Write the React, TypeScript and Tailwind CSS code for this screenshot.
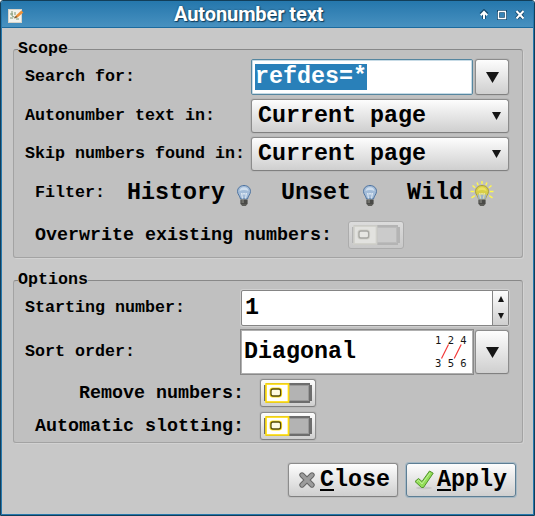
import type { ReactNode } from "react";

const MONO = "font-['Liberation_Mono',monospace] font-bold";
const RAISED =
  "rounded-[3px] border border-[#8c8c8c] border-b-[#808080] bg-gradient-to-b from-[#fdfdfd] to-[#cfcfcf] shadow-[0_0_0_1px_rgba(170,170,170,0.35)]";

function Label({ children, big = false }: { children: ReactNode; big?: boolean }) {
  return (
    <span className={`${MONO} whitespace-pre ${big ? "pt-[2px] text-[18.33px]" : "text-[16.67px]"} leading-[20px]`}>
      {children}
    </span>
  );
}

function Arrow({ w, h, up = false }: { w: number; h: number; up?: boolean }) {
  return (
    <svg width={w} height={h} viewBox="0 0 12 12" preserveAspectRatio="none" className="shrink-0">
      <path d={up ? "M0 12H12L6 0Z" : "M0 0H12L6 12Z"} fill="#151515" />
    </svg>
  );
}

function DropButton({ tall = false }: { tall?: boolean }) {
  return (
    <button className={`flex w-[34px] items-center justify-center ${tall ? "h-[44px]" : "h-[36px]"} ${RAISED}`}>
      <Arrow w={13} h={11} />
    </button>
  );
}

function Select({ value }: { value: string }) {
  return (
    <button className={`flex h-[34px] w-[258px] items-center justify-between pl-[6px] pr-[7px] ${RAISED}`}>
      <span className={`${MONO} text-[23.33px] leading-[30px]`}>{value}</span>
      <Arrow w={9} h={8} />
    </button>
  );
}

function Bulb({ lit = false }: { lit?: boolean }) {
  return (
    <svg width="26" height="26" viewBox="0 0 26 26" className="shrink-0">
      {lit && (
        <g stroke="#fff84c" strokeWidth="1.4">
          <path d="M13 0V3M8 1.5L9.2 4.2M18 1.5L16.8 4.2M3.5 4.5L6.2 6.8M22.5 4.5L19.8 6.8M1.5 10.5H5.2M20.8 10.5H24.5M2.5 16.8L5.8 14.6M23.5 16.8L20.2 14.6" />
        </g>
      )}
      <path
        d="M13 4.5C9 4.5 6.5 7.2 6.5 10.4C6.5 13.3 9 14.9 9.5 18H16.5C17 14.9 19.5 13.3 19.5 10.4C19.5 7.2 17 4.5 13 4.5Z"
        fill={lit ? "#d8cf48" : "#a3bcd8"}
        stroke={lit ? "#a89d42" : "#4f74a0"}
      />
      {lit && <path d="M8.4 13.5H17.6L16.4 18.2H9.6Z" fill="#9fb4c8" />}
      <path d="M8.5 10Q9 6.3 13 6.2Q17 6.3 17.5 10Q13 7.8 8.5 10Z" fill={lit ? "#ece262" : "#cfdeee"} />
      <path d="M11.5 17.5L10.5 12L12 13.5L13 12L14 13.5L15.5 12L14.5 17.5" fill="none" stroke={lit ? "#e9e6a4" : "#e0eaf4"} />
      <path d="M9.5 18.5H16.5V23L14.8 25H11.2L9.5 23Z" fill="#5c5c58" />
      <path d="M9.5 20H16.5M9.5 22H16.5" stroke="#393937" />
      <path d="M10.5 19H13M10.5 21H13" stroke="#96968f" />
    </svg>
  );
}

function Toggle({ disabled = false }: { disabled?: boolean }) {
  return (
    <button
      className={`flex h-[28px] w-[56px] items-center justify-center ${disabled ? "rounded-[3px] border border-[#acacac] bg-gradient-to-b from-[#dcdcdc] to-[#c8c8c8]" : RAISED}`}
    >
      <svg width="48" height="20" viewBox="0 0 48 20">
        <rect x="2" y="0" width="44" height="20" fill={disabled ? "#b4b4b4" : "#6d6d6d"} />
        <rect x="0" y="2" width="48" height="16" fill={disabled ? "#b4b4b4" : "#6d6d6d"} />
        <rect x="25" y="2.5" width="19.5" height="15" fill={disabled ? "#cbcbcb" : "#b3b3b3"} stroke={disabled ? "#bcbcbc" : "#999999"} />
        <rect x="2" y="1" width="22.5" height="18" fill={disabled ? "#e2e2df" : "#ffffff"} stroke={disabled ? "#d0d0cb" : "#ffdd10"} strokeWidth="1.7" />
        <rect x="6.8" y="5.8" width="10" height="7.4" rx="2" fill="none" stroke={disabled ? "#d0d0c9" : "#ffe01f"} strokeWidth="2.6" />
        <rect x="7" y="6" width="9.6" height="7" rx="2" fill={disabled ? "#e6e6e2" : "#fffbe0"} stroke={disabled ? "#a7a7a2" : "#554c0b"} strokeWidth="1.3" />
      </svg>
    </button>
  );
}

function FilterItem({ name, lit = false }: { name: string; lit?: boolean }) {
  return (
    <div className="flex items-center">
      <span className={`${MONO} text-[23.33px] leading-[28px]`}>{name}</span>
      <div className="mt-[2px] ml-[6px] flex">
        <Bulb lit={lit} />
      </div>
    </div>
  );
}

function TitleBar() {
  return (
    <header className="flex h-[26px] items-center border-b border-b-[#1c6b9f] bg-gradient-to-b from-[#2678ad] to-[#4791c0] pr-[9px] pl-[6px]">
      <svg width="16" height="14" viewBox="0 0 16 14" className="mt-[2px] shrink-0">
        <rect x=".5" y=".5" width="13" height="13" fill="#f2f2ed" stroke="#d7d4ca" />
        <path d="M2 5H5M4 2V7M4 7L8 9M2 9H5M8 10H11M7 3V6" stroke="#7f9877" fill="none" />
        <path d="M6.3 9.2L8 6.5L13.3 1.5L15.4 3.5L9.8 8.2Z" fill="#ed9138" />
        <path d="M6 9.5L8 6.7L9.5 8.2Z" fill="#765a39" />
      </svg>
      <h1 className="mb-[2px] ml-[150px] text-[20px] leading-[22px] font-bold tracking-[-0.1px] whitespace-nowrap text-white font-['Roboto',sans-serif] [text-shadow:1px_1px_1px_#103c5a,0_0_2px_#103c5a]">
        Autonumber text
      </h1>
      <svg width="46" height="12" viewBox="0 0 46 12" className="ml-auto shrink-0">
        <g fill="none" stroke="#174c70" strokeWidth="4">
          <path d="M6 10V3M3 5.5L6 2.5L9 5.5" />
          <rect x="20.5" y="2.5" width="7" height="7" strokeWidth="3" />
          <path d="M38.5 2L45.5 9.5M45.5 2L38.5 9.5" />
        </g>
        <g fill="none" stroke="#fff" strokeWidth="2">
          <path d="M6 10V3M2.8 6.2L6 3L9.2 6.2" />
          <path d="M20 2.5H28M20.5 3V9.5H27.5V3" strokeWidth="1.4" />
          <path d="M38.5 2L45.5 9.5M45.5 2L38.5 9.5" />
        </g>
      </svg>
    </header>
  );
}

function Group({ title, children, className }: { title: string; children: ReactNode; className: string }) {
  return (
    <fieldset className={`w-[510px] rounded-[3px] border border-[#a3a3a3] border-t-[#888888] bg-[#c0c0c0] shadow-[1px_1px_0_#d2d2d2] ${className}`}>
      <legend className="ml-[4px] h-[18px]">
        <span className={`${MONO} block text-[16.67px] leading-[18px]`}>{title}</span>
      </legend>
      {children}
    </fieldset>
  );
}

function DiagonalPreview() {
  return (
    <svg width="36" height="36" viewBox="0 0 36 36" className="shrink-0">
      <path d="M8.5 24.5L15.5 10.5M21.2 24.5L28.2 10.5" stroke="#f33b3b" strokeWidth="1.2" />
      <g className="font-['DejaVu_Sans_Mono',monospace] text-[10.5px]" fill="#151515">
        <text x="2" y="10">1</text>
        <text x="14.7" y="10">2</text>
        <text x="27.3" y="10">4</text>
        <text x="2" y="33">3</text>
        <text x="14.7" y="33">5</text>
        <text x="27.3" y="33">6</text>
      </g>
    </svg>
  );
}

export default function App() {
  return (
    <main className="flex h-[516px] w-[535px] flex-col overflow-hidden rounded-t-[3px] border border-[#123e59] bg-[#c8c8c8] text-black">
      <div className="flex grow flex-col border border-[#2678ad]">
        <TitleBar />
        <section className="flex grow flex-col pl-[11px]">
          <Group title="Scope" className="mt-[12px] h-[218px]">
            <div className="mt-[1px] flex h-[36px] items-center justify-between pr-[13px] pl-[11px]">
              <Label>Search for:</Label>
              <div className="flex gap-[2px]">
                <div className="flex h-[36px] w-[222px] items-center rounded-[2px] border border-[#56869f] bg-white pl-[3px] shadow-[inset_0_0_0_1px_#c7dbe6]">
                  <span className={`${MONO} h-[26px] bg-[#2980b9] text-[23.33px] leading-[26px] text-white`}>refdes=*</span>
                </div>
                <DropButton />
              </div>
            </div>
            <div className="mt-[4px] flex h-[34px] items-center justify-between pr-[13px] pl-[11px]">
              <Label>Autonumber text in:</Label>
              <Select value="Current page" />
            </div>
            <div className="mt-[4px] flex h-[34px] items-center justify-between pr-[13px] pl-[11px]">
              <Label>Skip numbers found in:</Label>
              <Select value="Current page" />
            </div>
            <div className="mt-[8px] flex h-[28px] items-center pl-[21px]">
              <Label>Filter:</Label>
              <div className="ml-[22px] flex gap-[24px]">
                <FilterItem name="History" />
                <FilterItem name="Unset" />
                <FilterItem name="Wild" lit />
              </div>
            </div>
            <div className="mt-[14px] flex items-center pl-[21px]">
              <Label big>Overwrite existing numbers:</Label>
              <div className="ml-[16px]"><Toggle disabled /></div>
            </div>
          </Group>

          <Group title="Options" className="mt-[13px] h-[172px]">
            <div className="mt-[1px] flex h-[36px] items-center justify-between pr-[13px] pl-[11px]">
              <Label>Starting number:</Label>
              <div className="flex h-[36px] w-[268px] rounded-[2px] border border-[#858585] bg-white shadow-[0_0_0_1px_#d0d0d0]">
                <span className={`${MONO} grow pl-[3px] text-[23.33px] leading-[34px]`}>1</span>
                <div className="flex w-[16px] flex-col items-center justify-between border-l border-[#858585] bg-gradient-to-b from-[#fdfdfd] to-[#cfcfcf] pt-[5px] pb-[6px]">
                  <Arrow w={6} h={6} up />
                  <Arrow w={6} h={6} />
                </div>
              </div>
            </div>
            <div className="mt-[3px] flex h-[46px] items-center justify-between pr-[13px] pl-[11px]">
              <Label>Sort order:</Label>
              <div className="flex items-center gap-[1px]">
                <div className="flex h-[46px] w-[234px] items-center justify-between border border-[#898989] bg-white pr-[4px] pl-[3px] shadow-[inset_0_0_0_1px_#b0b0b0]">
                  <span className={`${MONO} text-[23.33px] leading-[30px]`}>Diagonal</span>
                  <DiagonalPreview />
                </div>
                <DropButton tall />
              </div>
            </div>
            <div className="mt-[4px] flex w-[302px] items-center justify-end gap-[16px]">
              <Label big>Remove numbers:</Label>
              <Toggle />
            </div>
            <div className="mt-[5px] flex w-[302px] items-center justify-end gap-[16px]">
              <Label big>Automatic slotting:</Label>
              <Toggle />
            </div>
          </Group>

          <footer className="mt-[20px] flex justify-end gap-[8px] pr-[17px]">
            <button className={`flex h-[34px] w-[110px] items-center pl-[9px] ${RAISED}`}>
              <svg width="18" height="18" viewBox="0 0 18 18" className="shrink-0">
                <path d="M4 4L14 14M14 4L4 14" stroke="#656565" strokeWidth="5.4" strokeLinecap="round" />
                <path d="M4 4L14 14M14 4L4 14" stroke="#9c9c9c" strokeWidth="3.4" strokeLinecap="round" />
              </svg>
              <span className={`${MONO} ml-[4px] text-[23.33px] leading-[30px]`}>
                <u className="decoration-2 underline-offset-[3px]">C</u>lose
              </span>
            </button>
            <button className="flex h-[34px] w-[110px] items-center rounded-[3px] border border-[#5d7e94] bg-gradient-to-b from-[#fdfdfd] to-[#cfcfcf] pl-[7px] shadow-[0_0_0_1px_#a5b8c4]">
              <svg width="20" height="20" viewBox="0 0 20 20" className="shrink-0">
                <ellipse cx="10" cy="18" rx="8" ry="1.5" fill="#c6c6c6" />
                <path d="M1 11.5L4.5 8.5L8 11.5L15.5 1L19.2 3.2L9.5 17.5H7.5Z" fill="#93de58" stroke="#4f922a" strokeLinejoin="round" />
                <path d="M3 11.5L4.5 10.2L8 14L16 3" stroke="#c2f29c" fill="none" />
              </svg>
              <span className={`${MONO} ml-[3px] text-[23.33px] leading-[30px]`}>
                <u className="decoration-2 underline-offset-[3px]">A</u>pply
              </span>
            </button>
          </footer>
        </section>
      </div>
    </main>
  );
}
